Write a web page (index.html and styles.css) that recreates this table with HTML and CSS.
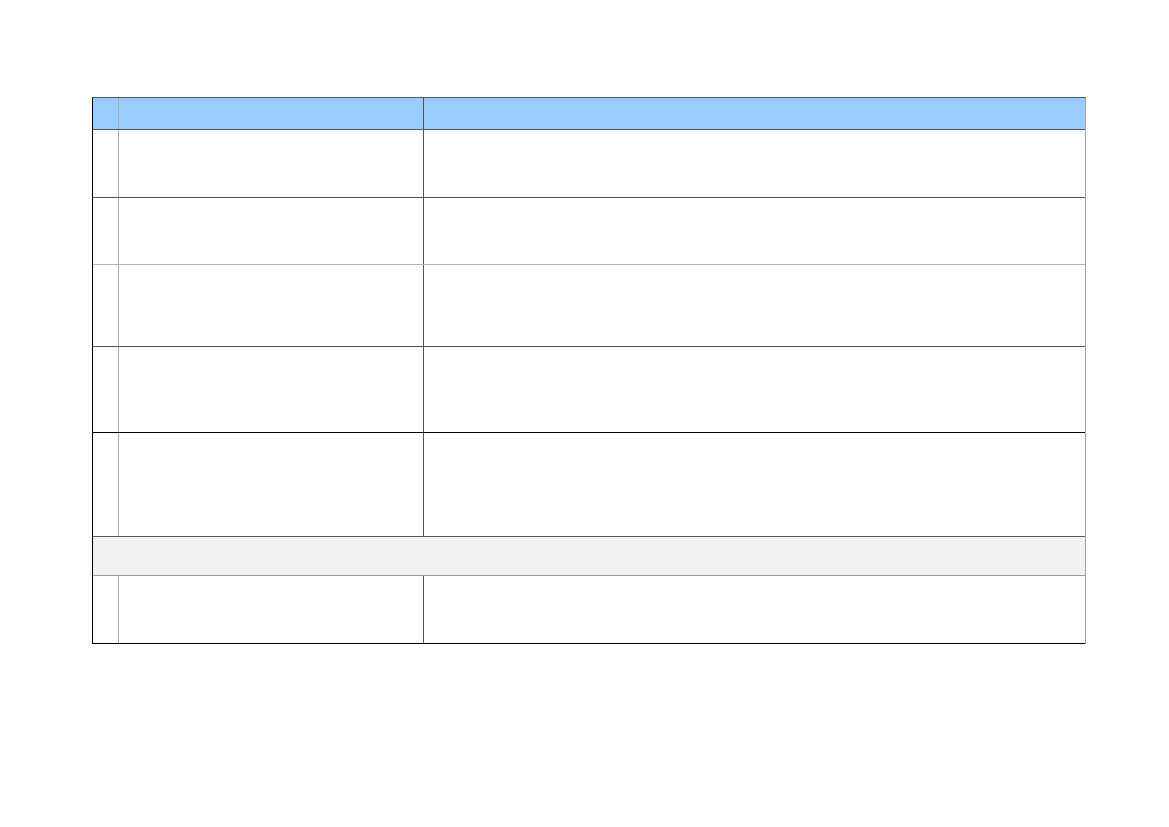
FILE: index.html
```html
<!DOCTYPE html>
<html lang="en">
<head>
<meta charset="utf-8">
<title>Table</title>
<link rel="stylesheet" href="styles.css">
</head>
<body>
<div class="page">
  <div class="table">
    <div class="row head h32"><div class="c1"></div><div class="c2"></div><div class="c3"></div></div>
    <div class="row h68 line-dark"><div class="c1"></div><div class="c2"></div><div class="c3"></div></div>
    <div class="row h67 line-light"><div class="c1"></div><div class="c2"></div><div class="c3"></div></div>
    <div class="row h82 line-dark"><div class="c1"></div><div class="c2"></div><div class="c3"></div></div>
    <div class="row h86 line-black"><div class="c1"></div><div class="c2"></div><div class="c3"></div></div>
    <div class="row h104 line-dark"><div class="c1"></div><div class="c2"></div><div class="c3"></div></div>
    <div class="row section h39 line-mid"></div>
    <div class="row h68 line-black"><div class="c1"></div><div class="c2"></div><div class="c3"></div></div>
  </div>
</div>
</body>
</html>
```

FILE: styles.css
```css
html, body {
  margin: 0;
  padding: 0;
  background: #ffffff;
  font-family: "Liberation Sans", Arial, sans-serif;
}
.page {
  padding: 97px 0 0 92px;
}
.table {
  width: 994px;
  box-sizing: border-box;
  border-left: 1px solid #000000;
  border-top: 1px solid #555555;
  border-right: 1px solid #a6a6a6;
  display: flex;
  flex-direction: column;
}
.row {
  display: flex;
  box-sizing: border-box;
  border-bottom: 1px solid #555555;
}
.head { background: #99ccff; }
.section { background: #f2f2f2; }
.h32 { height: 32px; }
.h67 { height: 67px; }
.h68 { height: 68px; }
.h82 { height: 82px; }
.h86 { height: 86px; }
.h104 { height: 104px; }
.h39 { height: 39px; }
.line-dark { border-bottom-color: #555555; }
.line-light { border-bottom-color: #b3b3b3; }
.line-black { border-bottom-color: #000000; }
.line-mid { border-bottom-color: #999999; }
.c1 {
  width: 25px;
  flex: none;
  border-right: 1px solid #aaaaaa;
}
.c2 {
  width: 304px;
  flex: none;
  border-right: 1px solid #555555;
}
.c3 {
  flex: 1;
}
```
